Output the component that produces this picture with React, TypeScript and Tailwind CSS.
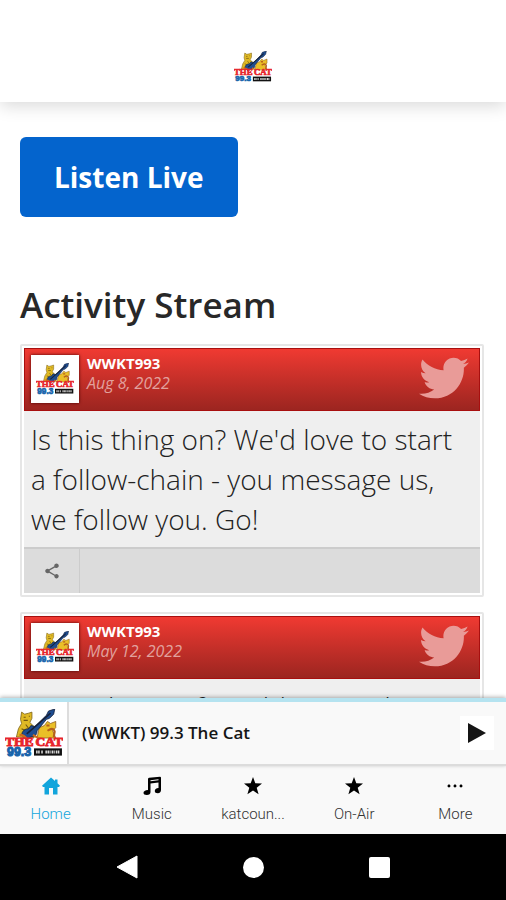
import { FaTwitter } from "react-icons/fa";
import { IoIosMore } from "react-icons/io";
import { MdShare } from "react-icons/md";

type IconProps = { className?: string };

const HomeIcon = ({ className }: IconProps) => (
  <svg viewBox="0 0 20 20" className={className} fill="currentColor">
    <path d="M10 1.500 14 5V3.500h2.500v3.700L19 9.700 18 11h-1.500v7.500H12V12H8v6.500H3.500V11H2L1 9.700Z" />
  </svg>
);

const MusicIcon = ({ className }: IconProps) => (
  <svg viewBox="0 0 20 20" className={className} fill="currentColor">
    <path
      fillRule="evenodd"
      d="M6 3Q6 2 7 1.800L18 .8Q19 .8 19 1.800V14q0 3-3.200 3.200-3 0-3-2.200 0-2.700 3.700-3V6.500L8.500 7.500V16q0 3-3.700 3Q1.500 19 1.500 16.800q0-2.600 4.500-2.900ZM8.500 4.200v1.100L16.500 4.300V3.200Z"
    />
  </svg>
);

const StarIcon = ({ className }: IconProps) => (
  <svg viewBox="0 0 20 20" className={className} fill="currentColor">
    <path d="M10 1 12.300 7.200 19 7.500 13.700 11.700 15.600 18.300 10 14.500 4.400 18.300 6.300 11.700 1 7.500 7.700 7.200Z" />
  </svg>
);

const posts = [
  {
    date: "Aug 8, 2022",
    text: "Is this thing on? We'd love to start a follow-chain - you message us, we follow you. Go!",
  },
  {
    date: "May 12, 2022",
    text: "come hear a few old songs during our show",
  },
];

const tabs = [
  { label: "Home", icon: HomeIcon },
  { label: "Music", icon: MusicIcon },
  { label: "katcoun...", icon: StarIcon },
  { label: "On-Air", icon: StarIcon },
  { label: "More", icon: IoIosMore },
];

const CatLogo = ({ className }: IconProps) => (
  <svg viewBox="0 0 56 46" className={className} role="img" aria-label="The Cat 99.3">
    {/* big cat */}
    <path
      d="M11 27 13 19 16 14 15 10 16 3 19 5 23 4 26 3 26 9 24 13 28 17 28 28Z"
      fill="#dfb924"
      stroke="#80651a"
      strokeWidth="0.8"
    />
    <path d="M18 8h2M23 7h1M18 11h4M16 19l4 2M20 15l3 4" stroke="#715510" strokeWidth="1" />
    {/* small cat */}
    <path
      d="M31 28 33 18 38 16 41 12 44 14 49 12 49 18 46 21 49 28Z"
      fill="#eabf27"
      stroke="#93631f"
      strokeWidth="0.8"
    />
    <path d="M41 21q6-4 7 1l-1 5M40 16h3" fill="none" stroke="#b5601c" strokeWidth="2" />
    {/* guitar */}
    <path
      d="M16 25q1-6 7-6l2-3 4 1 11-11 2-4 6-2-1 5-4 4-3 1-9 11q0 6-6 6l-4 3Z"
      fill="#1e4d91"
      stroke="#14223e"
      strokeWidth="0.8"
    />
    <path d="M21 24 44 4" stroke="#172139" strokeWidth="1.500" />
    <path d="M14 25q5 0 7 4M27 25l5 3" stroke="#d06b1c" strokeWidth="2" fill="none" />
    <g
      fontFamily="Liberation Serif, serif"
      fontWeight="700"
      fontSize="13"
      fill="#e7252b"
      stroke="#e7252b"
      strokeWidth="1"
    >
      <text x="0" y="36">
        THE
      </text>
      <text x="56" y="36" textAnchor="end">
        CAT
      </text>
    </g>
    <text
      x="2"
      y="45"
      fontFamily="Liberation Sans, sans-serif"
      fontWeight="700"
      fontSize="12"
      fill="#1764ab"
      stroke="#1764ab"
      strokeWidth="1"
    >
      99.3
    </text>
    <path d="M28 38h27v7H28z" fill="#111" />
    <path d="M30 41.500h4m1 0h2m2 0h5m1 0h3m1 0h4" stroke="#d9d9d9" strokeWidth="3" strokeDasharray="1.500 0.500" />
  </svg>
);

const Post = ({ date, text }: { date: string; text: string }) => (
  <article className="rounded-xs border-2 border-[#e6e6e6] bg-white p-0.5">
    <div className="flex h-[63px] items-start border border-[#a80f0f] bg-linear-to-b from-[#f03a32] to-[#9c2520] px-1.5 pt-1">
      <div className="mt-0.5 flex size-12 items-center justify-center bg-white shadow-[0_0_3px_#400]">
        <CatLogo className="w-[38px]" />
      </div>
      <div className="ml-2 flex-1 leading-5">
        <p className="text-[15px] leading-5 font-bold text-white">WWKT993</p>
        <p className="text-base leading-5 italic text-[#e2a19d]">{date}</p>
      </div>
      <FaTwitter className="mr-1 size-[50px] text-[#e99b98]" />
    </div>
    <p className="bg-[#efefef] py-2 pr-4 pl-[7px] text-[28px] leading-10 font-light text-[#222]">
      {text}
    </p>
    <div className="flex h-[46px] border-t-2 border-[#ccc] bg-[#dcdcdc]">
      <button
        aria-label="Share"
        className="flex w-14 items-center justify-center border-r border-[#ccc] text-[#666]"
      >
        <MdShare className="size-[18px]" />
      </button>
    </div>
  </article>
);

export default function App() {
  return (
    <div className="flex h-screen flex-col bg-white font-['Open_Sans',sans-serif]">
      <header className="relative z-10 flex h-[102px] shrink-0 justify-center bg-white pt-[51px] shadow-[0_4px_16px_rgba(0,0,0,0.15)]">
        <CatLogo className="h-[31px]" />
      </header>

      <main className="min-h-0 flex-1 overflow-hidden px-5 pt-[35px]">
        <button className="h-20 rounded-md bg-[#0464cd] px-[34px] text-[28px] font-bold text-white">
          Listen Live
        </button>
        <h1 className="mt-16 text-[35px] leading-12 font-semibold text-[#282828]">
          Activity Stream
        </h1>
        <div className="mt-[15px] mr-0.5 space-y-[15px]">
          {posts.map((post) => (
            <Post key={post.date} {...post} />
          ))}
        </div>
      </main>

      <section className="relative z-10 flex h-[68px] shrink-0 items-center border-t-4 border-b-2 border-t-[#b5e3f0] border-b-[#dcdcdc] bg-[#f9f9f9] shadow-[0_-1px_4px_rgba(0,0,0,0.3)]">
        <div className="flex h-full w-[69px] items-center justify-center border-r-2 border-[#ddd] bg-white">
          <CatLogo className="w-[58px]" />
        </div>
        <p className="ml-[13px] flex-1 text-[17px] font-semibold text-[#151515]">
          (WWKT) 99.3 The Cat
        </p>
        <button
          aria-label="Play"
          className="mr-3 flex size-[34px] items-center justify-center bg-white"
        >
          <svg viewBox="0 0 18 20" className="h-5">
            <path d="M0 0 18 10 0 20Z" fill="#151515" />
          </svg>
        </button>
      </section>

      <nav className="grid h-[68px] shrink-0 grid-cols-5 bg-[#f9f9f9] text-black">
        {tabs.map(({ label, icon: Icon }) => (
          <a
            key={label}
            href="#"
            className="group flex flex-col items-center gap-2 pt-2.5 first:text-[#12a5dc]"
          >
            <Icon className="size-5" />
            <span className="font-[Roboto,sans-serif] text-[15px] leading-5 font-light text-[#333] group-first:text-[#12a5dc]">
              {label}
            </span>
          </a>
        ))}
      </nav>

      <div className="flex h-[66px] shrink-0 items-center justify-center gap-[105px] bg-black">
        <button aria-label="Back">
          <svg viewBox="0 0 22 24" className="h-6">
            <path d="M21 1v22L1 12Z" fill="white" stroke="white" strokeWidth="1" strokeLinejoin="round" />
          </svg>
        </button>
        <button aria-label="Home screen" className="size-[21px] rounded-full bg-white" />
        <button aria-label="Recent apps" className="size-[21px] rounded-xs bg-white" />
      </div>
    </div>
  );
}
